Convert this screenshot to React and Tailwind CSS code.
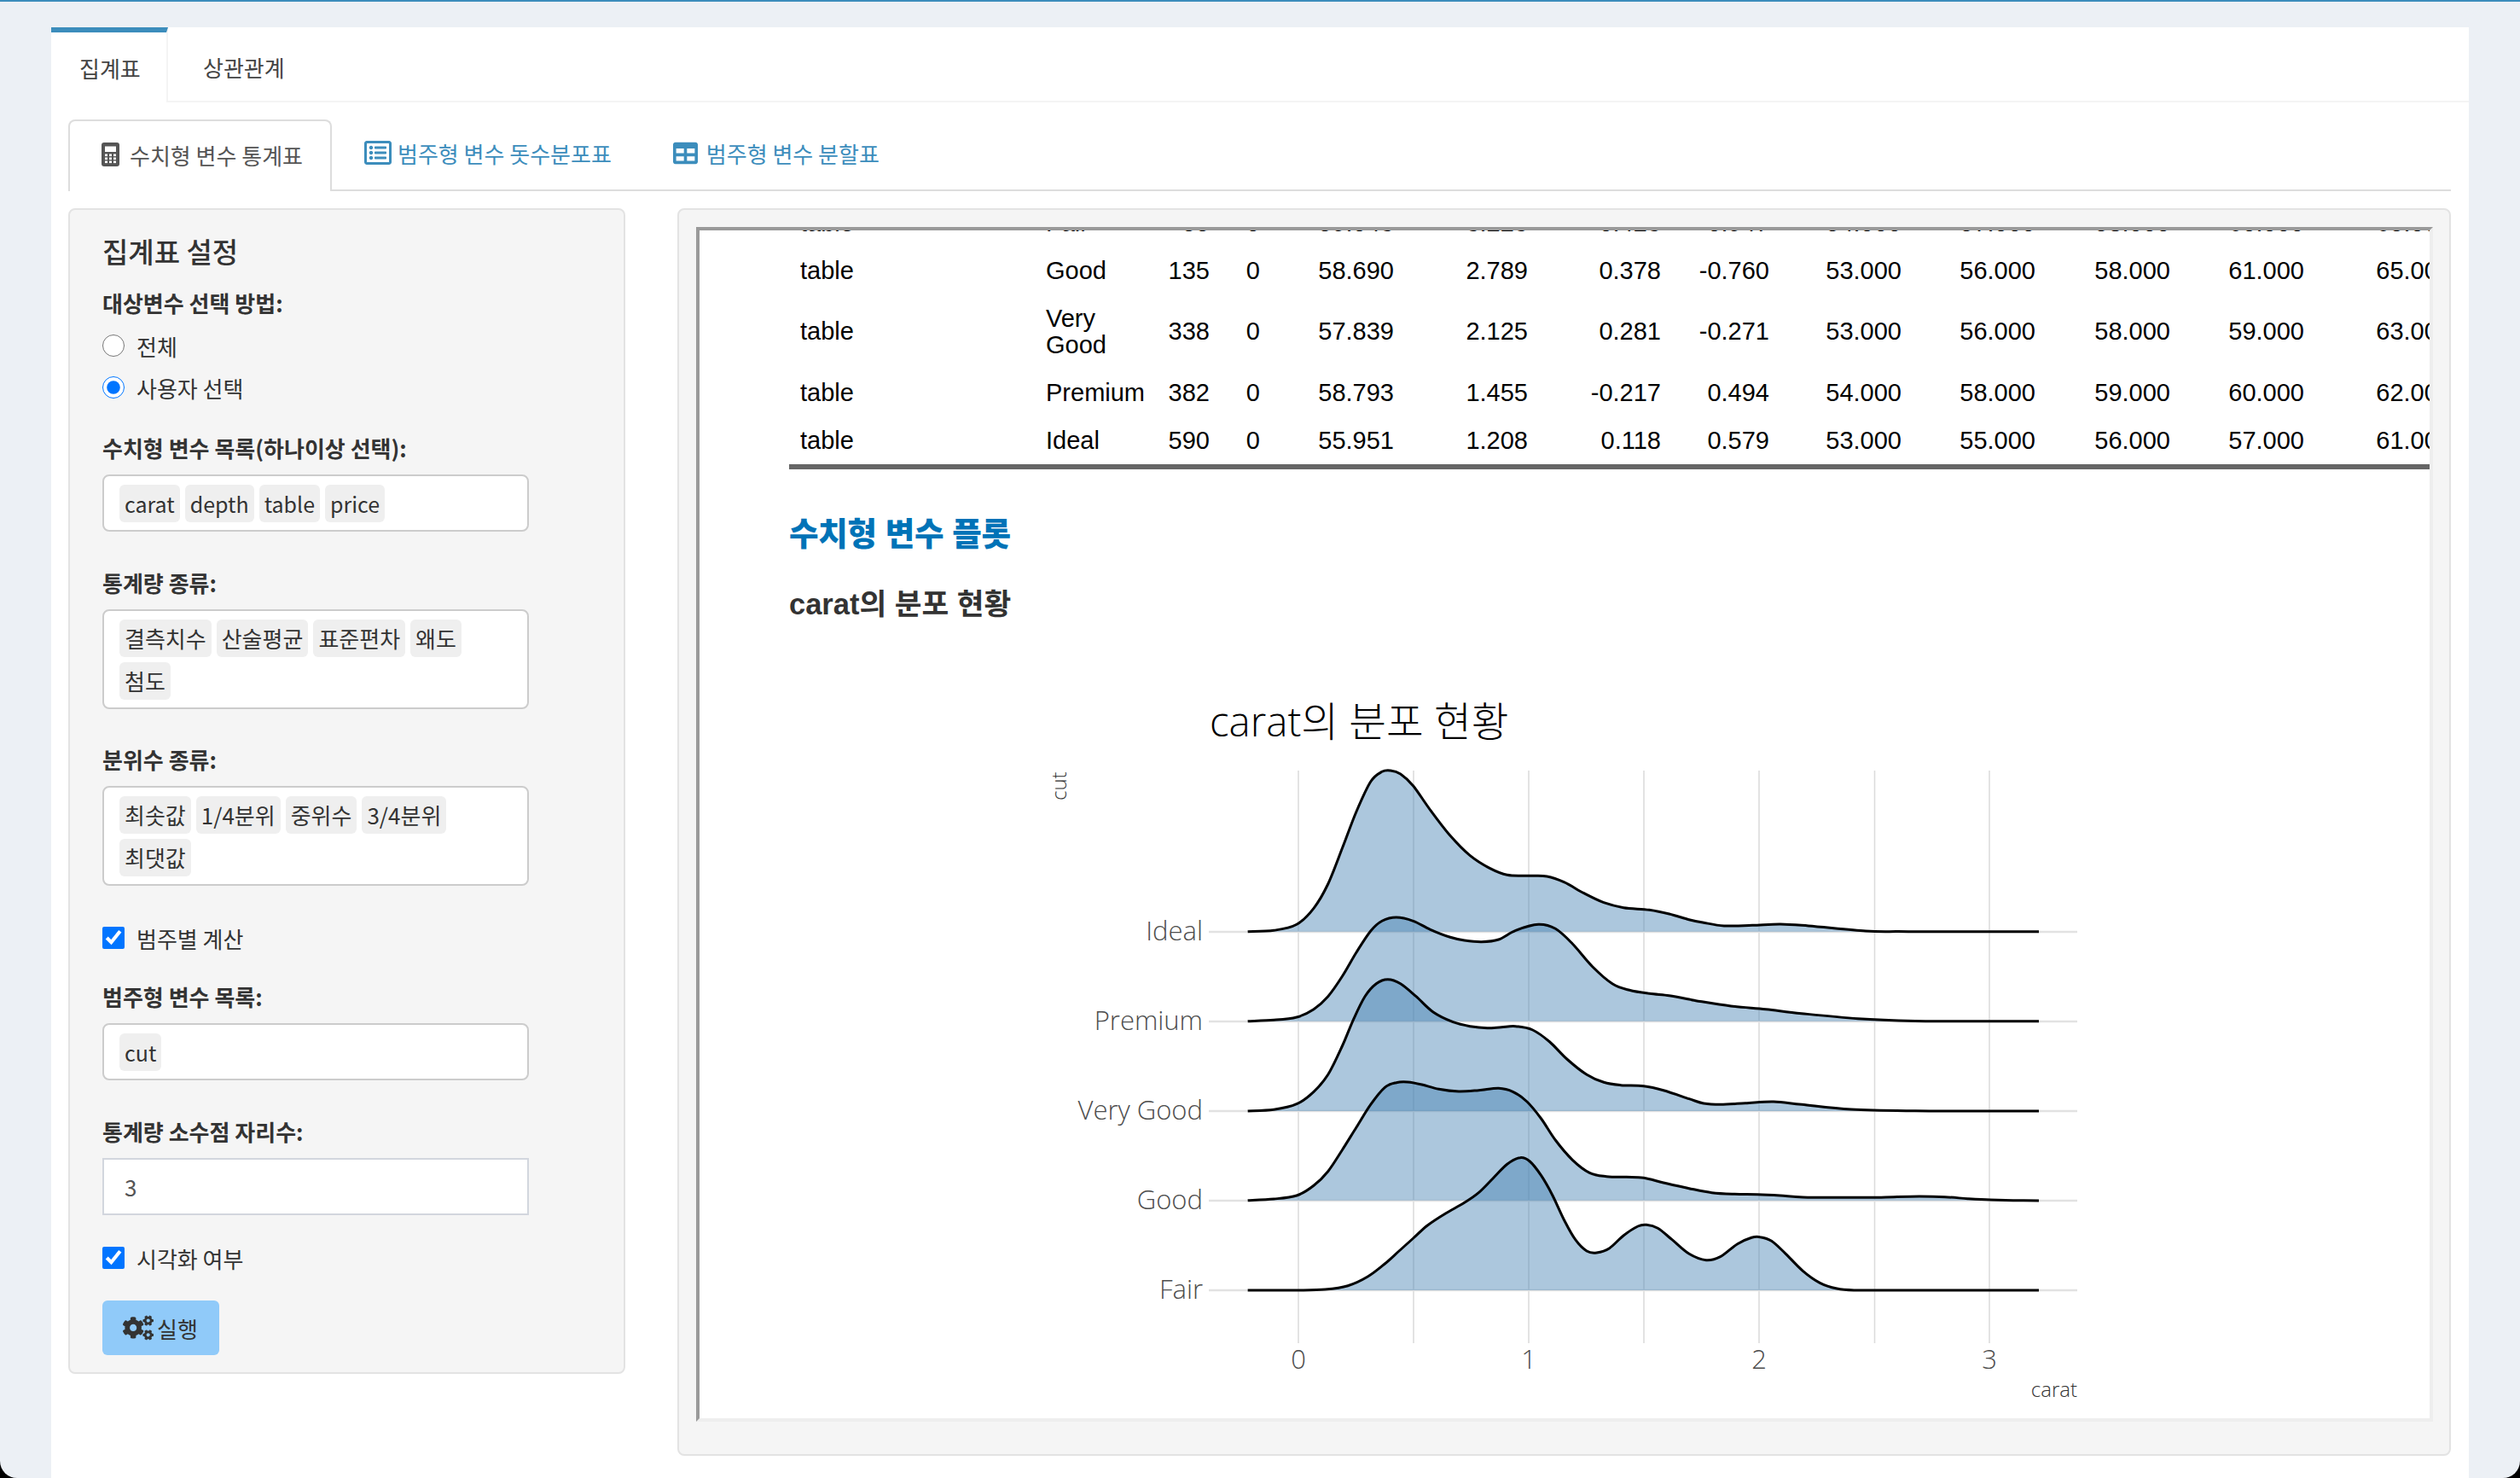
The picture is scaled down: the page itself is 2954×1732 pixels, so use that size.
import React from "react";
import { FaRegListAlt, FaTable, FaCogs } from "react-icons/fa";

const UI = { fontFamily: '"Noto Sans CJK KR","Noto Sans",sans-serif' };
const PLOT = '"Open Sans","Noto Sans CJK KR",sans-serif';
const MAIN = { fontFamily: '"Liberation Sans","Noto Sans CJK KR",sans-serif' };

const Chip = ({ children, latin }) => (
  <span className={"h-[44px] px-[6px] rounded-[6px] bg-[#efefef] text-[#333] leading-[44px] whitespace-nowrap " + (latin ? "text-[25px]" : "text-[26px]")}>{children}</span>
);
const ChipBox = ({ items, className, latin }) => (
  <div className={"w-[500px] border-2 border-[#cccccc] rounded-[8px] bg-white pl-[18px] pr-[24px] pt-[10px] pb-[9px] flex flex-wrap gap-[6px] " + className}>
    {items.map((t) => <Chip key={t} latin={latin}>{t}</Chip>)}
  </div>
);
const Label = ({ children, className }) => (
  <div className={"h-[38px] leading-[38px] text-[26px] font-bold text-[#333] " + className}>{children}</div>
);
const Check = ({ children, className }) => (
  <label className={"h-[38px] flex items-center text-[26px] text-[#333] " + className}>
    <input type="checkbox" defaultChecked className="w-[26px] h-[26px] m-0 mr-[14px]" />
    {children}
  </label>
);
const Radio = ({ children, checked, className }) => (
  <label className={"h-[38px] flex items-center text-[26px] text-[#333] " + className}>
    <input type="radio" name="method" defaultChecked={checked} className="w-[26px] h-[26px] m-0 mr-[14px]" />
    {children}
  </label>
);

const CalcIcon = () => (
  <svg width="21" height="28" viewBox="0 0 21 28" className="mr-[12px] shrink-0">
    <rect width="21" height="28" rx="3" fill="#555" />
    <rect x="4" y="4.5" width="13" height="6.5" fill="#fff" />
    {[13.5, 17.5, 21.5].map((y) => [4, 9, 14].map((x) => <rect key={x + "-" + y} x={x} y={y} width="3" height="2.6" fill="#fff" />))}
  </svg>
);

const COLS = [288, 142, 76, 59, 157, 157, 156, 127, 155, 157, 158, 157, 173];
const ROWS = [
  ["table", "Fair", "55", "0", "59.043", "3.223", "0.423", "-0.947", "54.000", "57.000", "58.000", "60.000", "65.000"],
  ["table", "Good", "135", "0", "58.690", "2.789", "0.378", "-0.760", "53.000", "56.000", "58.000", "61.000", "65.000"],
  ["table", "Very Good", "338", "0", "57.839", "2.125", "0.281", "-0.271", "53.000", "56.000", "58.000", "59.000", "63.000"],
  ["table", "Premium", "382", "0", "58.793", "1.455", "-0.217", "0.494", "54.000", "58.000", "59.000", "60.000", "62.000"],
  ["table", "Ideal", "590", "0", "55.951", "1.208", "0.118", "0.579", "53.000", "55.000", "56.000", "57.000", "61.000"],
];

const frame = (ox, oy, arr) => arr.map(([x, y]) => [ox + x / 3, oy + y / 3]);
const curves = [
  { base: 1090.7, pts: [
    ...frame(1460, 880, [[8,632],[100,628],[180,607],[240,550],[290,465],[340,340],[390,210],[440,105],[480,70],[510,66],[545,78],[590,120],[650,205],[720,295],[790,365],[860,410],[920,433],[1000,436],[1060,438],[1120,458],[1190,497],[1260,530],[1330,548],[1420,556],[1490,570],[1560,590]]),
    [1996,1080],[2021,1084],[2054,1083.3],[2087,1082],[2120,1084],[2187,1090],[2225,1090.6],[2261,1090.7],[2320,1090.7],[2390,1090.7] ] },
  { base: 1195.7, pts: [
    ...frame(1460, 880, [[8,947],[100,943],[180,933],[240,905],[290,860],[340,790],[390,705],[440,630],[480,595],[530,582],[590,595],[650,625],[720,652],[770,663],[830,668],[890,660],[950,628],[1030,607],[1090,622],[1150,675],[1220,755],[1290,815],[1350,838],[1420,850],[1490,857],[1560,870]]),
    [1988,1171.7],[2029,1178],[2070,1181.7],[2112,1186.7],[2178,1192.7],[2245,1195.5],[2300,1195.7],[2390,1195.7] ] },
  { base: 1301, pts: [
    ...frame(1460, 1130, [[8,513],[100,508],[180,488],[240,445],[290,385],[340,285],[380,190],[420,110],[460,65],[500,50],[545,65],[600,110],[660,165],[730,200],[790,215],[850,221],[900,218],[950,215],[1010,228],[1070,270],[1130,330],[1200,385],[1260,412],[1320,422],[1400,425],[1470,440],[1560,470]]),
    [1997,1292],[2017,1293.3],[2046,1291.7],[2079,1290],[2112,1293.3],[2170,1299],[2245,1300.8],[2300,1301],[2390,1301] ] },
  { base: 1405.7, pts: [
    ...frame(1460, 1130, [[8,827],[100,822],[180,810],[240,775],[290,725],[340,650],[390,570],[440,490],[490,430],[530,413],[570,411],[620,420],[680,436],[750,444],[820,440],[890,433],[940,445],[990,480],[1040,540],[1090,615],[1150,685],[1210,730],[1270,743],[1340,745],[1400,748],[1470,765],[1560,785]]),
    ...frame(1960, 1340, [[60,155],[140,170],[220,175],[300,176],[380,180],[460,186],[600,187],[700,187],[780,185],[870,183],[960,185],[1040,191],[1120,195],[1200,197],[1290,198]]) ] },
  { base: 1511, pts: [
    ...frame(1460, 1340, [[8,513],[100,513],[180,513],[280,510],[360,497],[430,465],[490,420],[540,375],[590,330],[640,285],[700,245],[770,205],[820,170],[870,120],[920,70],[965,47],[1000,60],[1040,110],[1080,180],[1120,265],[1160,335],[1200,375],[1235,381],[1280,365],[1330,320],[1380,288],[1410,283],[1450,295],[1500,335]]),
    ...frame(1960, 1340, [[60,385],[120,407],[170,395],[230,350],[280,328],[310,326],[350,340],[400,385],[460,445],[520,487],[580,507],[640,513],[700,513],[800,513],[1000,513],[1290,513]]) ] },
];
function smooth(points) {
  let d = `M${points[0][0]} ${points[0][1]}`;
  for (let i = 0; i < points.length - 1; i++) {
    const p0 = points[i - 1] || points[i], p1 = points[i], p2 = points[i + 1], p3 = points[i + 2] || p2;
    const c1 = [p1[0] + (p2[0] - p0[0]) / 6, p1[1] + (p2[1] - p0[1]) / 6];
    const c2 = [p2[0] - (p3[0] - p1[0]) / 6, p2[1] - (p3[1] - p1[1]) / 6];
    d += `C${c1[0].toFixed(1)} ${c1[1].toFixed(1)} ${c2[0].toFixed(1)} ${c2[1].toFixed(1)} ${p2[0].toFixed(1)} ${p2[1].toFixed(1)}`;
  }
  return d;
}

function Plot() {
  const major = [1522, 1792, 2062, 2332];
  const minor = [1657, 1927, 2197.5];
  const labels = [["Ideal", 1091], ["Premium", 1196], ["Very Good", 1301], ["Good", 1406], ["Fair", 1511]];
  return (
    <svg width="1924" height="930" viewBox="925 729 1924 930" className="block" style={{ fontFamily: PLOT }}>
      <text x="1418" y="862" fontSize="47.5" fontWeight="300" fill="#000">carat의 분포 현황</text>
      <text transform="translate(1250 937) rotate(-90)" fontSize="24" fontWeight="300" fill="#333">cut</text>
      {[...minor, ...major].map((x) => <line key={x} x1={x} x2={x} y1="902" y2="1573" stroke="#dcdcdc" strokeWidth="1.6" />)}
      {labels.map(([t, y]) => <line key={t} x1="1417" x2="2435" y1={y} y2={y} stroke="#e2e2e2" strokeWidth="2.5" />)}
      {curves.map((c, i) => {
        const line = smooth(c.pts);
        return (
          <g key={i}>
            <path d={`${line}L${c.pts[c.pts.length - 1][0]} ${c.base}L${c.pts[0][0]} ${c.base}Z`} fill="#4682b4" fillOpacity="0.45" />
            <path d={line} fill="none" stroke="#000" strokeWidth="3" />
          </g>
        );
      })}
      {labels.map(([t, y]) => <text key={t} x="1410" y={y + 10} textAnchor="end" fontSize="31" fontWeight="300" fill="#4d4d4d">{t}</text>)}
      {major.map((x, i) => <text key={x} x={x} y="1603" textAnchor="middle" fontSize="31" fontWeight="300" fill="#4d4d4d">{i}</text>)}
      <text x="2435" y="1636" textAnchor="end" fontSize="24" fontWeight="300" fill="#333">carat</text>
    </svg>
  );
}

export default function App() {
  return (
    <div className="w-[2954px] h-[1732px] bg-black overflow-hidden" style={UI}>
      <div className="h-[1732px] bg-[#ecf0f5] rounded-b-[20px] overflow-hidden border-t-2 border-[#3c8dbc] pt-[30px] pl-[60px] pr-[60px]">
        <div className="bg-white h-[1700px]">
          <div className="h-[88px] flex border-b-2 border-[#f4f4f4] text-[26px] text-[#444]">
            <div className="w-[137px] h-[88px] border-t-[6px] border-r-2 border-t-[#3c8dbc] border-r-[#f4f4f4] bg-white flex items-center pl-[33px]">집계표</div>
            <div className="pl-[41px] flex items-center pt-[6px]">상관관계</div>
          </div>
          <div className="pl-[20px] pr-[21px]">
            <div className="mt-[20px] h-[84px] flex border-b-2 border-[#dddddd] text-[26px] text-[#3c8dbc]">
              <div className="w-[309px] h-[84px] border-2 border-b-0 border-[#dddddd] rounded-t-[8px] bg-white flex items-center pl-[37px] pb-[4px] text-[#555]">
                <CalcIcon />수치형 변수 통계표
              </div>
              <div className="ml-[38px] flex items-center pb-[4px]">
                <FaRegListAlt className="w-[32px] h-[32px] mr-[7px]" />범주형 변수 돗수분포표
              </div>
              <div className="ml-[72px] flex items-center pb-[4px]">
                <FaTable className="w-[29px] h-[29px] mr-[10px]" />범주형 변수 분할표
              </div>
            </div>

            <div className="mt-[20px] flex items-start">
              <div className="w-[653px] shrink-0 border-2 border-[#e3e3e3] rounded-[8px] bg-[#f5f5f5] px-[38px] pt-[25px] pb-[20px]">
                <div className="h-[46px] leading-[46px] text-[33px] font-medium text-[#333]">집계표 설정</div>
                <Label className="mt-[19px]">대상변수 선택 방법:</Label>
                <Radio className="mt-[12px]">전체</Radio>
                <Radio checked className="mt-[11px]">사용자 선택</Radio>
                <Label className="mt-[33px]">수치형 변수 목록(하나이상 선택):</Label>
                <ChipBox latin className="mt-[12px]" items={["carat", "depth", "table", "price"]} />
                <Label className="mt-[41px]">통계량 종류:</Label>
                <ChipBox className="mt-[12px]" items={["결측치수", "산술평균", "표준편차", "왜도", "첨도"]} />
                <Label className="mt-[40px]">분위수 종류:</Label>
                <ChipBox className="mt-[12px]" items={["최솟값", "1/4분위", "중위수", "3/4분위", "최댓값"]} />
                <Check className="mt-[42px]">범주별 계산</Check>
                <Label className="mt-[31px]">범주형 변수 목록:</Label>
                <ChipBox latin className="mt-[12px]" items={["cut"]} />
                <Label className="mt-[41px]">통계량 소수점 자리수:</Label>
                <div className="mt-[12px] w-[500px] h-[67px] border-2 border-[#d2d6de] bg-white pl-[24px] flex items-center text-[26px] text-[#555]">3</div>
                <Check className="mt-[31px]">시각화 여부</Check>
                <div className="mt-[31px] w-[137px] h-[64px] rounded-[6px] bg-[#90caf9] text-[#333] text-[26px] flex items-center pl-[24px]">
                  <FaCogs className="w-[36px] h-[30px] mr-[4px] shrink-0" />실행
                </div>
              </div>

              <div className="ml-[61px] w-[2079px] h-[1462px] border-2 border-[#e3e3e3] rounded-[8px] bg-[#f5f5f5] pt-[20px] pl-[20px]">
                <div className="w-[2036px] h-[1400px] border-[4px] border-t-[#9a9a9a] border-l-[#9a9a9a] border-r-[#eeeeee] border-b-[#eeeeee] bg-white overflow-hidden" style={MAIN}>
                  <div className="-mt-[37px] pl-[105px]">
                    <table className="table-fixed w-[1962px] border-b-[6px] border-[#666666] text-[29px] leading-[31px] text-black">
                      <colgroup>{COLS.map((w, i) => <col key={i} style={{ width: w }} />)}</colgroup>
                      <tbody>
                        {ROWS.map((r, i) => (
                          <tr key={i}>
                            {r.map((c, j) => (
                              <td key={j} className={"py-[12.5px] px-[13px] " + (j < 2 ? "text-left" : "text-right")}>{c}</td>
                            ))}
                          </tr>
                        ))}
                      </tbody>
                    </table>
                    <h3 className="mt-[50px] h-[52px] leading-[52px] text-[37.5px] font-extrabold text-[#0073b7] tracking-[-0.3px]">수치형 변수 플롯</h3>
                    <h4 className="mt-[34px] h-[44px] leading-[44px] text-[34.5px] font-bold text-[#333]">carat의 분포 현황</h4>
                    <Plot />
                  </div>
                </div>
              </div>
            </div>
          </div>
        </div>
      </div>
    </div>
  );
}
